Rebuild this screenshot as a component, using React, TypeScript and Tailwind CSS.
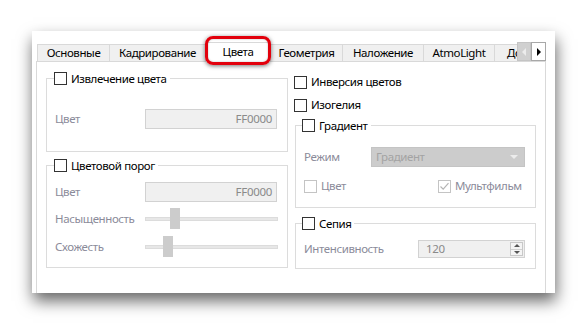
import React from "react";

const font = { fontFamily: '"Noto Sans", "Liberation Sans", sans-serif' };

function Box({ disabled, checked }: { disabled?: boolean; checked?: boolean }) {
  return (
    <span
      className={
        disabled
          ? "w-[13px] h-[13px] border border-[#c4c4c4] bg-white flex items-center justify-center shrink-0"
          : "w-[13px] h-[13px] border border-[#333333] bg-white flex items-center justify-center shrink-0"
      }
    >
      {checked && (
        <svg width="11" height="11" viewBox="0 0 11 11">
          <path d="M1.5 5.5 L4.2 8.2 L9.5 2.2" fill="none" stroke="#b4b4b4" strokeWidth="1.2" />
        </svg>
      )}
    </span>
  );
}

function Legend({ text, left }: { text: string; left: string }) {
  return (
    <div className={`absolute top-[-8px] ${left} h-[15px] flex items-center gap-[4px] bg-white pr-[3px] text-[11.5px] tracking-[-0.4px] text-black leading-none`}>
      <Box />
      <span>{text}</span>
    </div>
  );
}

function Slider({ pos }: { pos: number }) {
  return (
    <div className="relative w-[133px] h-[21px] flex items-center">
      <div className="w-full h-[4px] bg-[#e7e7e7] border border-[#dcdcdc]" />
      <div className="absolute top-0 w-[10px] h-[21px] bg-[#cccccc]" style={{ left: pos }} />
    </div>
  );
}

function Tab({ label, w, first }: { label: string; w: string; first?: boolean }) {
  return (
    <div
      className={`${w} h-[17px] shrink-0 bg-[#f0f0f0] border-t border-r border-[#d9d9d9] ${first ? "border-l" : ""} flex items-center justify-center text-[11.5px] tracking-[-0.4px] text-black whitespace-nowrap`}
    >
      {label}
    </div>
  );
}

export default function App() {
  const lbl = "text-[11.5px] tracking-[-0.4px] text-[#8b8b9a]";
  return (
    <div className="w-[587px] h-[324px] bg-white overflow-hidden pt-[31px] pl-[32px]" style={font}>
      <div className="w-[523px] h-[262px] bg-white shadow-[1px_8px_15px_rgba(0,0,0,0.6)] overflow-hidden pl-[4px] pt-[11px] pr-[9px] flex flex-col">
        {/* Tab row */}
        <div className="ml-px h-[19px] flex items-end">
          <div className="w-[480px] h-[19px] flex items-end">
            <Tab label="Основные" w="w-[73px]" first />
            <Tab label="Кадрирование" w="w-[96px]" />
            <div className="relative z-10 w-[65px] h-[20px] -mb-px shrink-0 bg-white border-t border-r border-[#d9d9d9] flex items-center justify-center text-[11.5px] tracking-[-0.4px] text-black pb-[2px]">
              Цвета
              <div className="absolute left-[-1px] right-[-1px] top-[-7px] bottom-[-3px] rounded-[8px] border-[3px] border-[#e2000c] shadow-[0_1px_4px_rgba(0,0,0,0.55),inset_0_0_2px_rgba(0,0,0,0.3)]" />
            </div>
            <Tab label="Геометрия" w="w-[72px]" />
            <Tab label="Наложение" w="w-[81px]" />
            <Tab label="AtmoLight" w="w-[71px]" />
            <div className="w-[22px] h-[17px] shrink-0 overflow-hidden bg-[#f0f0f0] border-t border-[#d9d9d9] flex items-center pl-[12px] text-[11.5px] tracking-[-0.4px] text-black whitespace-nowrap">
              Доп
            </div>
          </div>
          <div className="w-[14px] h-[19px] bg-[#d0d0d0] border border-[#c4c4c4] flex items-center justify-center">
            <span className="w-0 h-0 border-y-[4px] border-y-transparent border-r-[4px] border-r-[#ececec]" />
          </div>
          <div className="w-[15px] h-[19px] bg-white border border-[#a8a8a8] flex items-center justify-center">
            <span className="w-0 h-0 border-y-[4px] border-y-transparent border-l-[4px] border-l-black" />
          </div>
        </div>

        {/* Panel */}
        <div className="h-[260px] shrink-0 border border-[#d9d9d9] bg-white flex pl-[9px] pt-[9px] gap-[6px]">
          {/* Left column */}
          <div className="w-[242px] flex flex-col">
            <div className="relative mt-[7px] h-[74px] border border-[#dcdcdc] pt-[30px] pl-[8px]">
              <Legend text="Извлечение цвета" left="left-[7px]" />
              <div className="flex items-center h-[20px]">
                <span className={`w-[90px] ${lbl}`}>Цвет</span>
                <div className="w-[132px] h-[20px] bg-[#f0f0f0] border border-[#d2d2d2] flex items-center justify-end pr-[4px] text-[11.5px] tracking-[-0.3px] text-[#8a8a8a]">
                  FF0000
                </div>
              </div>
            </div>
            <div className="relative mt-[13px] h-[103px] border border-[#dcdcdc] pt-[16px] pl-[8px]">
              <Legend text="Цветовой порог" left="left-[7px]" />
              <div className="flex items-center h-[20px]">
                <span className={`w-[90px] ${lbl}`}>Цвет</span>
                <div className="w-[132px] h-[20px] bg-[#f0f0f0] border border-[#d2d2d2] flex items-center justify-end pr-[4px] text-[11.5px] tracking-[-0.3px] text-[#8a8a8a]">
                  FF0000
                </div>
              </div>
              <div className="flex items-center h-[21px] mt-[6px]">
                <span className={`w-[90px] ${lbl}`}>Насыщенность</span>
                <Slider pos={25} />
              </div>
              <div className="flex items-center h-[21px] mt-[7px]">
                <span className={`w-[90px] ${lbl}`}>Схожесть</span>
                <Slider pos={18} />
              </div>
            </div>
          </div>

          {/* Right column */}
          <div className="w-[242px] flex flex-col">
            <div className="h-[22px] flex items-center gap-[4px] text-[11.5px] tracking-[-0.4px] text-black">
              <Box />
              <span>Инверсия цветов</span>
            </div>
            <div className="mt-px h-[22px] flex items-center gap-[4px] text-[11.5px] tracking-[-0.4px] text-black">
              <Box />
              <span>Изогелия</span>
            </div>
            <div className="relative ml-px mt-[9px] h-[83px] border border-[#dcdcdc] pt-[21px] pl-[8px]">
              <Legend text="Градиент" left="left-[6px]" />
              <div className="flex items-center h-[20px]">
                <span className={`w-[67px] ${lbl}`}>Режим</span>
                <div className="w-[154px] h-[20px] bg-[#cccccc] border border-[#c4c4c4] flex items-center justify-between pl-[4px] pr-[6px] text-[11.5px] tracking-[-0.4px] text-[#a3a3a3]">
                  <span>Градиент</span>
                  <span className="w-0 h-0 border-x-[4px] border-x-transparent border-t-[4px] border-t-[#ececec]" />
                </div>
              </div>
              <div className="flex items-center h-[20px] mt-[9px]">
                <div className="w-[134px] flex items-center gap-[4px]">
                  <Box disabled />
                  <span className={lbl}>Цвет</span>
                </div>
                <div className="flex items-center gap-[4px]">
                  <Box disabled checked />
                  <span className={lbl}>Мультфильм</span>
                </div>
              </div>
            </div>
            <div className="relative ml-px mt-[15px] h-[46px] border border-[#dcdcdc] pt-[16px] pl-[8px]">
              <Legend text="Сепия" left="left-[6px]" />
              <div className="flex items-center h-[18px]">
                <span className={`w-[114px] ${lbl}`}>Интенсивность</span>
                <div className="w-[107px] h-[18px] bg-[#f0f0f0] border border-[#d2d2d2] flex items-center justify-between pl-[7px] pr-px text-[11.5px] tracking-[-0.3px] text-[#8a8a8a]">
                  <span>120</span>
                  <div className="w-[13px] h-[14px] border border-[#c8c8c8] bg-[#f4f4f4] flex flex-col">
                    <div className="flex-1 flex items-center justify-center border-b border-[#d0d0d0]">
                      <span className="w-0 h-0 border-x-[3px] border-x-transparent border-b-[3px] border-b-[#555555]" />
                    </div>
                    <div className="flex-1 flex items-center justify-center">
                      <span className="w-0 h-0 border-x-[3px] border-x-transparent border-t-[3px] border-t-[#555555]" />
                    </div>
                  </div>
                </div>
              </div>
            </div>
          </div>
        </div>
      </div>
    </div>
  );
}
